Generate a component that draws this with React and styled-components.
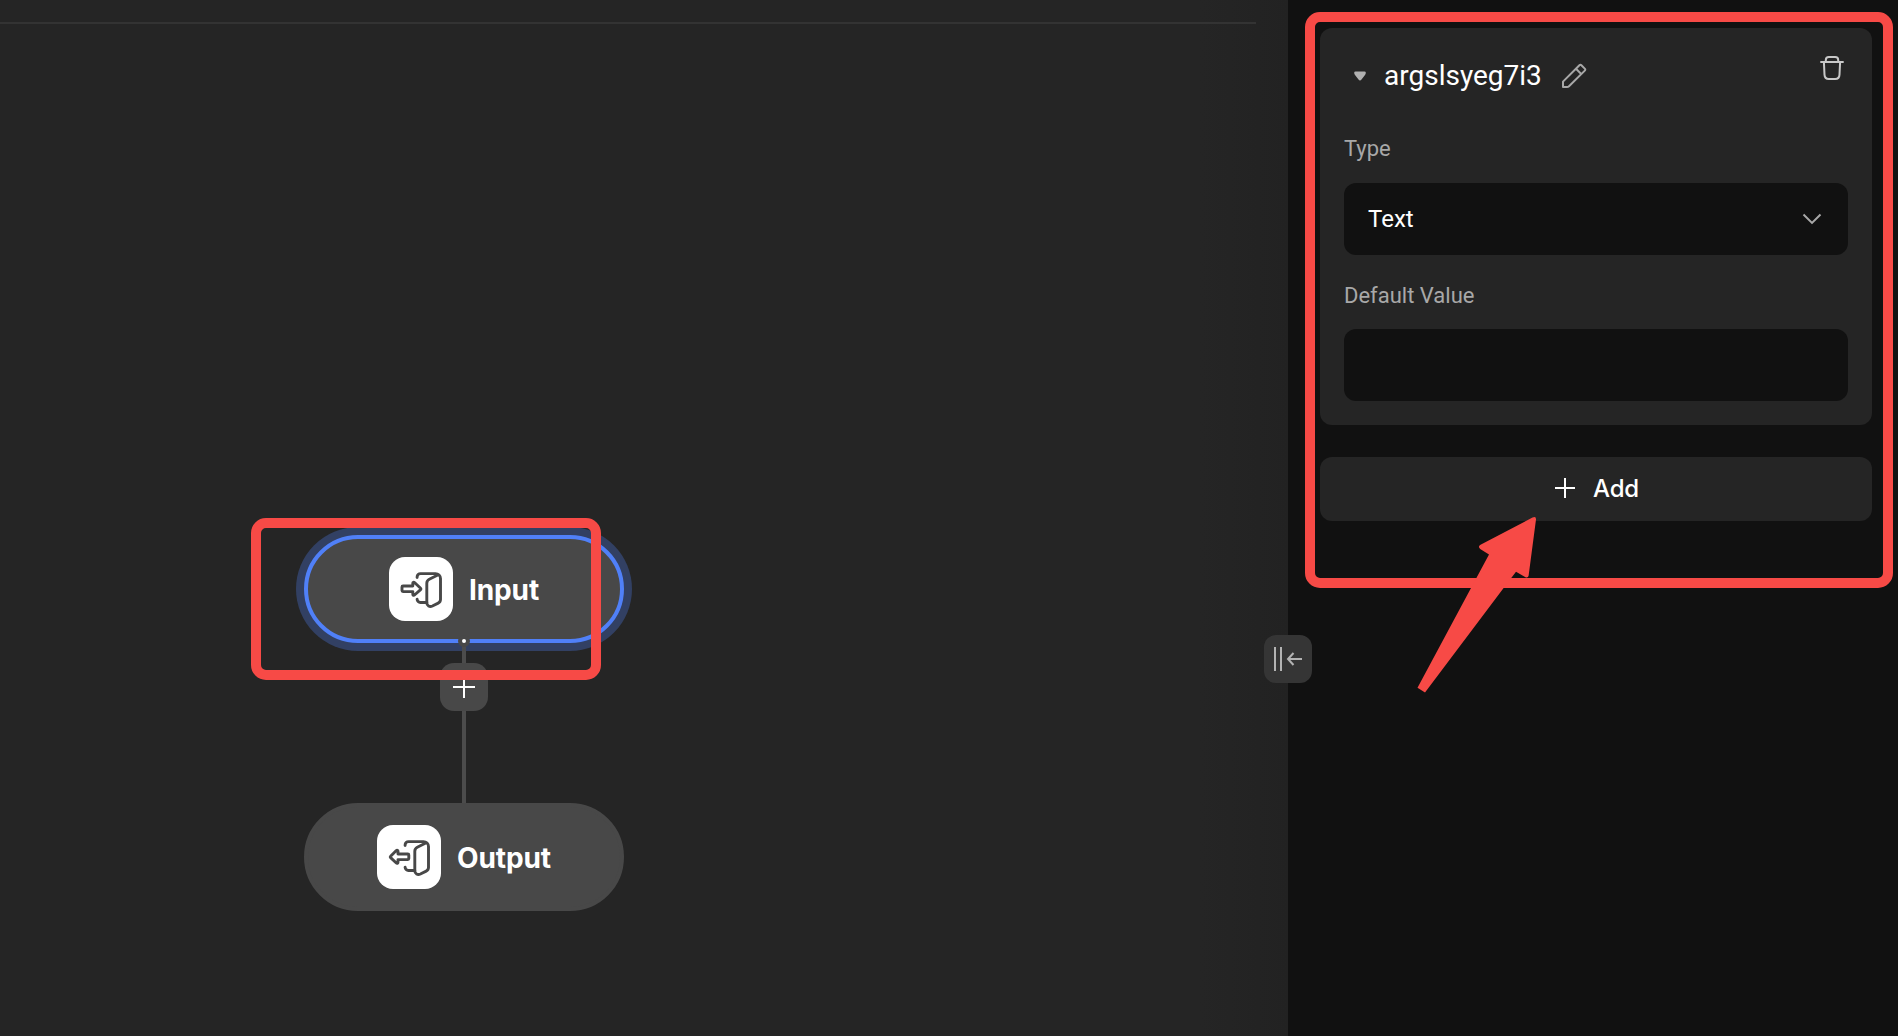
import React from "react";
import styled, { createGlobalStyle } from "styled-components";

const GlobalStyle = createGlobalStyle`
  * { box-sizing: border-box; }
  body { margin: 0; background: #111111; }
`;

const Layout = styled.div`
  position: relative;
  display: flex;
  width: 1898px;
  height: 1036px;
  overflow: hidden;
  background: #111111;
  font-family: Roboto, "Liberation Sans", sans-serif;
  color: #ffffff;
`;

const Canvas = styled.main`
  position: relative;
  flex: none;
  width: 1288px;
  height: 100%;
  padding: 22px 32px 0 0;
  background: linear-gradient(to right, #252525 1200px, #222222 1288px);
`;

const Divider = styled.div`
  height: 2px;
  background: #333333;
`;

const Node = styled.div`
  position: absolute;
  left: 304px;
  top: ${(p) => p.$top}px;
  width: 320px;
  height: 108px;
  display: flex;
  align-items: center;
  justify-content: center;
  gap: 16px;
  border-radius: 54px;
  border: 4px solid ${(p) => (p.$selected ? "#5080f8" : "#484848")};
  background: #484848;
  box-shadow: ${(p) => (p.$selected ? "0 0 0 8px #324063" : "none")};
`;

const NodeIcon = styled.div`
  width: 64px;
  height: 64px;
  border-radius: 16px;
  background: #ffffff;
  color: #484848;
`;

const NodeLabel = styled.span`
  padding-top: 2px;
  font: 700 28px/34px Inter, sans-serif;
  letter-spacing: -0.1px;
`;

const Edge = styled.div`
  position: absolute;
  left: 462px;
  top: 641px;
  width: 4px;
  height: 162px;
  background: #4c4c4c;
`;

const Handle = styled.div`
  position: absolute;
  left: 458px;
  top: 635px;
  width: 12px;
  height: 12px;
  border: 4px solid #484848;
  border-radius: 50%;
  background: #ffffff;
`;

const InsertButton = styled.button`
  position: absolute;
  left: 440px;
  top: 663px;
  display: flex;
  align-items: center;
  justify-content: center;
  width: 48px;
  height: 48px;
  padding: 0;
  border: 0;
  border-radius: 14px;
  background: #484848;
`;

const Sidebar = styled.aside`
  flex: 1;
  display: flex;
  flex-direction: column;
  gap: 32px;
  padding: 28px 26px 0 32px;
  background: #111111;
`;

const Card = styled.section`
  display: flex;
  flex-direction: column;
  height: 397px;
  padding: 24px;
  border-radius: 12px;
  background: #252525;
`;

const CardHeader = styled.header`
  display: flex;
  height: 48px;
  padding: 0 0 0 10px;
`;

const CardTitle = styled.h2`
  flex: 1;
  display: flex;
  align-items: center;
  margin: 0;
  font-size: 28px;
  font-weight: 400;
  line-height: 48px;
`;

const TitleText = styled.span`
  margin: 0 19px 0 18px;
`;

const DeleteButton = styled.button`
  width: 24px;
  height: 24px;
  margin: 4px 4px 0 0;
  padding: 0;
  border: 0;
  background: none;
`;

const Label = styled.label`
  margin-top: ${(p) => p.$before}px;
  margin-bottom: ${(p) => p.$after}px;
  font-size: 22px;
  line-height: 32px;
  color: #a8a8a8;
`;

const Field = styled.div`
  display: flex;
  align-items: center;
  justify-content: space-between;
  height: 72px;
  padding: 0 24px;
  border-radius: 12px;
  background: #111111;
  font-size: 24px;
  line-height: 32px;
`;

const AddButton = styled.button`
  display: flex;
  align-items: center;
  justify-content: center;
  gap: 18px;
  height: 64px;
  padding: 0 0 0 2px;
  border: 0;
  border-radius: 12px;
  background: #252525;
  color: #ffffff;
  font: 500 24px/32px Inter, sans-serif;
  letter-spacing: -0.2px;
`;

const PlusSlot = styled.span`
  display: flex;
  margin-top: -2px;
`;

const CollapseButton = styled.button`
  position: absolute;
  left: 1264px;
  top: 635px;
  width: 48px;
  height: 48px;
  padding: 0;
  border: 0;
  border-radius: 12px;
  background: #353535;
`;

const Highlight = styled.div`
  position: absolute;
  left: ${(p) => p.$x}px;
  top: ${(p) => p.$y}px;
  width: ${(p) => p.$w}px;
  height: ${(p) => p.$h}px;
  border: 10px solid #f74a46;
  border-radius: 15px;
  pointer-events: none;
`;

const Pointer = styled.svg`
  position: absolute;
  left: 1410px;
  top: 510px;
  pointer-events: none;
`;

const Glyph = styled.svg`
  display: block;
  flex: none;
  fill: none;
  stroke: ${(p) => p.$color || "currentColor"};
  stroke-width: ${(p) => p.$weight || 2};
`;

function DoorIcon({ arrow }) {
  return (
    <Glyph width="64" height="64" $weight={2.9} strokeLinecap="round" strokeLinejoin="round">
      <path d="M28.1 20.6V20a3.4 3.4 0 0 1 3.4-3.4H46.5a5 5 0 0 1 5 5V42.5a4 4 0 0 1-2.3 3.6l-5.8 2.9c-2.8 1.3-5.6-.2-5.6-3.3V26.2a4.5 4.5 0 0 1 2.5-4L48.8 18" />
      <path d="M28.1 42.3a3.3 3.3 0 0 0 3.3 3.2H37.8" />
      <path d={arrow} />
    </Glyph>
  );
}

function PlusIcon({ size }) {
  const c = size / 2;
  return (
    <Glyph width={size} height={size} $color="#ffffff">
      <path d={`M0 ${c}H${size}M${c} 0V${size}`} />
    </Glyph>
  );
}

export default function App() {
  return (
    <Layout>
      <GlobalStyle />
      <Canvas>
        <Divider />
        <Node $top={535} $selected>
          <NodeIcon>
            <DoorIcon arrow="M14 29H23.8V26.2c0-1 1-1.3 1.7-.7L31.6 31.2q.7.7 0 1.4L25.5 38c-.7.7-1.7.3-1.7-.7V34.6H14q-1 0-1-1V30q0-1 1-1Z" />
          </NodeIcon>
          <NodeLabel>Input</NodeLabel>
        </Node>
        <Node $top={803}>
          <NodeIcon>
            <DoorIcon arrow="M30.8 29H21V26.2c0-1-1-1.3-1.7-.7L13.6 31.2q-.7.7 0 1.4L19.3 38c.7.7 1.7.3 1.7-.7V34.6H30.8q1 0 1-1V30q0-1-1-1Z" />
          </NodeIcon>
          <NodeLabel>Output</NodeLabel>
        </Node>
        <Edge />
        <Handle />
        <InsertButton aria-label="Insert node">
          <PlusIcon size={22} />
        </InsertButton>
      </Canvas>

      <Sidebar>
        <Card>
          <CardHeader>
            <CardTitle>
              <svg width="12" height="10" viewBox="0 0 12 10">
                <path d="M1.6.5H10.4Q12 .5 11.8 2 11.7 3 11 4L7.5 8.4Q6 10.4 4.5 8.4L1 4Q.3 3 .2 2 0 .5 1.6.5Z" fill="#b0b0b0" />
              </svg>
              <TitleText>argslsyeg7i3</TitleText>
              <Glyph width="26" height="26" $color="#a8a8a8" $weight={2} strokeLinejoin="round">
                <path d="M2 24V18.6L18.4 2.2Q19.4 1.2 20.4 2.2L23.8 5.6Q24.8 6.6 23.8 7.6L8 23.2Q7.2 24 6 24ZM15 5.8L20.2 11" />
              </Glyph>
            </CardTitle>
            <DeleteButton aria-label="Delete">
              <Glyph width="24" height="24" $color="#c8c8c8">
                <path d="M.3 6H23.7M5.8 6V4Q5.8 1 8.8 1H15.2Q18.2 1 18.2 4V6M3.9 6L4.5 18.6Q4.7 23 8.8 23H15.2Q19.3 23 19.5 18.6L20.1 6" />
              </Glyph>
            </DeleteButton>
          </CardHeader>
          <Label $before={33} $after={18}>Type</Label>
          <Field>
            Text
            <Glyph width="24" height="24" $color="#a8a8a8">
              <path d="M3.5 7.5L12 15.9L20.5 7.5" />
            </Glyph>
          </Field>
          <Label $before={25} $after={17}>Default Value</Label>
          <Field />
        </Card>
        <AddButton>
          <PlusSlot>
            <PlusIcon size={20} />
          </PlusSlot>
          Add
        </AddButton>
      </Sidebar>

      <CollapseButton aria-label="Collapse panel">
        <Glyph width="48" height="48" $color="#b3b3b3">
          <path d="M11 12V36M17 12V36M38 24H24.5M29.5 18L24 24L29.5 30" />
        </Glyph>
      </CollapseButton>

      <Highlight $x={251} $y={518} $w={350} $h={162} />
      <Highlight $x={1305} $y={12} $w={588} $h={576} />
      <Pointer width="130" height="190">
        <path
          d="M7.5 177.8L79 44.5L70.2 39Q67.5 36.5 70.5 34.8L122.5 7.6Q126.2 6 126 9.5L118.6 65.8Q118 68.3 115.5 67.3L106 61.8L94 77.5L15 182.5Z"
          fill="#f74a46"
        />
      </Pointer>
    </Layout>
  );
}
